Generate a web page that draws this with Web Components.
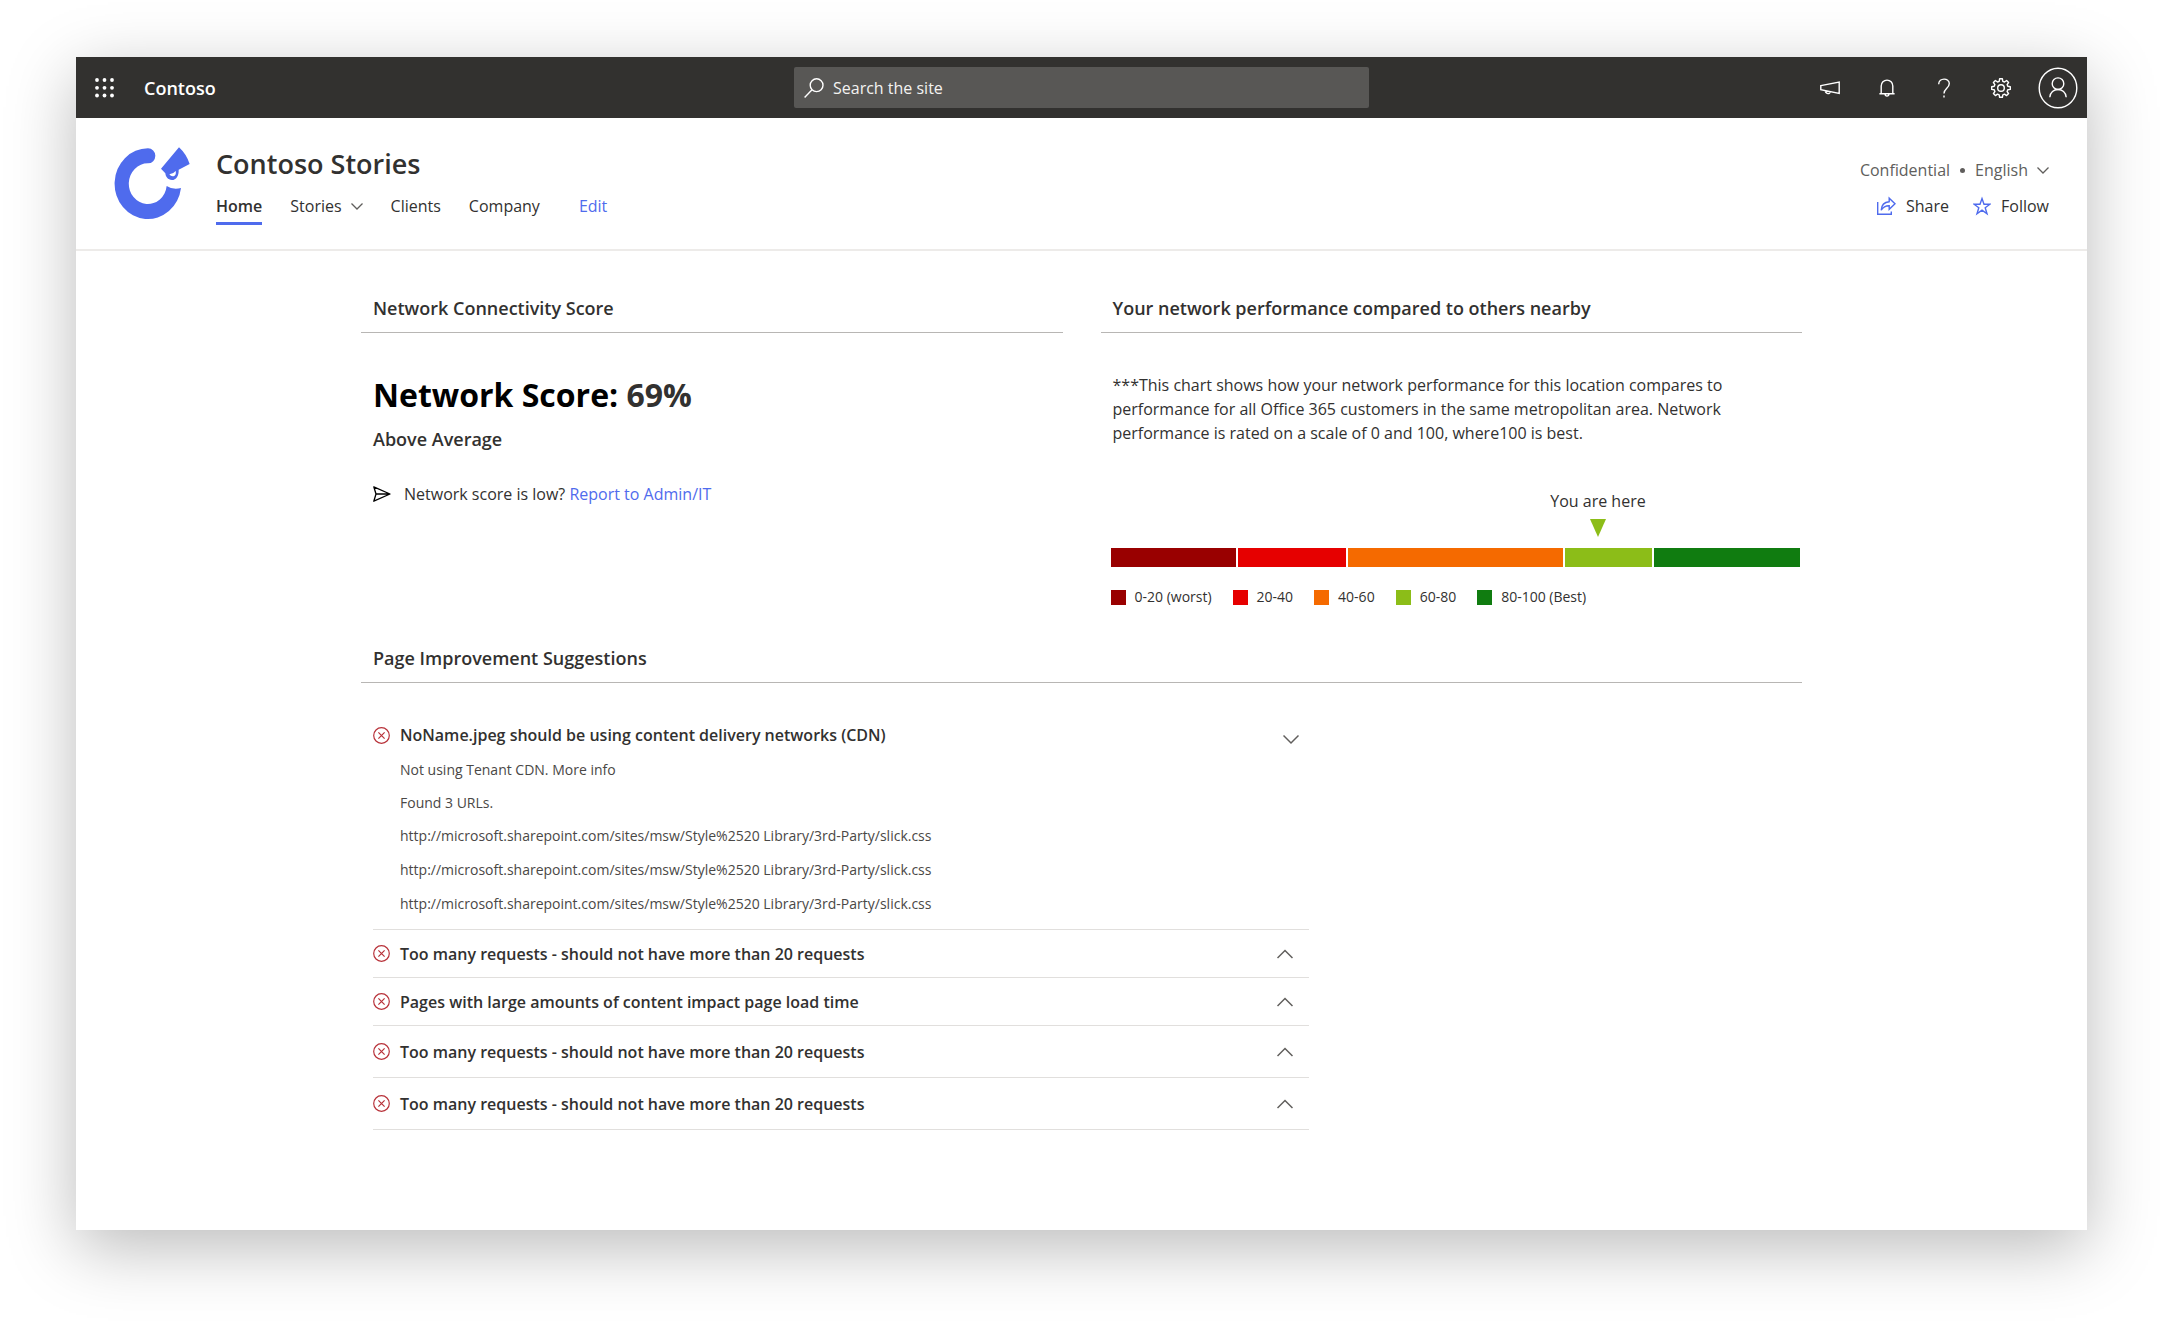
<!DOCTYPE html>
<html lang="en">
<head>
<meta charset="utf-8">
<title>Contoso Stories</title>
<style>
  body { margin: 0; background: #fff; color: #323130; font: 16px/24px "Open Sans", "Noto Sans", sans-serif; }
</style>
</head>
<body>
<site-frame>
  <suite-bar slot="bar" brand="Contoso"></suite-bar>
  <site-header slot="header" heading="Contoso Stories"></site-header>
  <titled-section heading="Network Connectivity Score">
    <network-score value="69%" rating="Above Average"></network-score>
  </titled-section>
  <titled-section heading="Your network performance compared to others nearby">
    <score-chart>***This chart shows how your network performance for this location compares to performance for all Office 365 customers in the same metropolitan area. Network performance is rated on a scale of 0 and 100, where100 is best.</score-chart>
  </titled-section>
  <titled-section class="wide" heading="Page Improvement Suggestions">
    <suggestion-list>
      <suggestion-item open heading="NoName.jpeg should be using content delivery networks (CDN)">
        <url-report></url-report>
      </suggestion-item>
      <suggestion-item heading="Too many requests - should not have more than 20 requests"></suggestion-item>
      <suggestion-item heading="Pages with large amounts of content impact page load time"></suggestion-item>
      <suggestion-item roomy heading="Too many requests - should not have more than 20 requests"></suggestion-item>
      <suggestion-item roomy heading="Too many requests - should not have more than 20 requests"></suggestion-item>
    </suggestion-list>
  </titled-section>
</site-frame>

<script>
const reset = `
  *, *::before, *::after { box-sizing: border-box; }
  button, input, select { font: inherit; color: inherit; background: none; border: 0; padding: 0; margin: 0; border-radius: 0; }
  button { cursor: pointer; text-align: left; }
  h1, h2, h3, p, ul { margin: 0; padding: 0; font: inherit; list-style: none; }
  a { color: inherit; text-decoration: none; }
  svg { display: block; flex: none; fill: none; stroke: currentColor; }
`;

function define(name, render) {
  customElements.define(name, class extends HTMLElement {
    constructor() {
      super();
      this.attachShadow({ mode: "open" });
    }
    connectedCallback() {
      this.shadowRoot.innerHTML = `<style>${reset}</style>` + render(this);
    }
  });
}

define("site-frame", () => `
  <style>
    :host { display: block; }
    .desk { padding: 57px 77px 96px 76px; background: #fff; }
    .window { background: #fff; box-shadow: 0 18px 64px rgba(0, 0, 0, 0.27); }
    main { display: grid; grid-template-columns: 1fr 1fr; column-gap: 38px; row-gap: 34px; max-width: 1441px; margin: 0 auto; padding: 40px 0 100px; }
    ::slotted(.wide) { grid-column: 1 / -1; }
  </style>
  <div class="desk"><div class="window">
    <slot name="bar"></slot>
    <slot name="header"></slot>
    <main><slot></slot></main>
  </div></div>
`);

define("suite-bar", el => `
  <style>
    :host { display: block; background: #32312f; color: #fff; }
    header { display: grid; grid-template-columns: 1fr 575px 1fr; align-items: center; height: 61px; }
    .start { display: flex; align-items: center; gap: 29px; padding-left: 19px; }
    .start svg { fill: #fff; stroke: none; }
    .brand { font-size: 18px; font-weight: 600; }
    label { display: flex; align-items: center; gap: 9px; height: 41px; padding: 0 10px; background: #585755; border-radius: 2px; }
    input { flex: 1; min-width: 0; outline: none; }
    input::placeholder { color: #f3f2f1; opacity: 1; }
    .end { display: flex; justify-content: flex-end; padding-right: 1px; }
    .end button { display: flex; align-items: center; justify-content: center; width: 57px; height: 61px; }
    svg { stroke-width: 1.4; }
  </style>
  <header>
    <div class="start">
      <button aria-label="App launcher"><svg width="20" height="20" viewBox="0 0 20 20">
        <circle cx="2" cy="2" r="1.9"/><circle cx="9.5" cy="2" r="1.9"/><circle cx="17" cy="2" r="1.9"/>
        <circle cx="2" cy="9.8" r="1.9"/><circle cx="9.5" cy="9.8" r="1.9"/><circle cx="17" cy="9.8" r="1.9"/>
        <circle cx="2" cy="17.5" r="1.9"/><circle cx="9.5" cy="17.5" r="1.9"/><circle cx="17" cy="17.5" r="1.9"/>
      </svg></button>
      <a class="brand" href="#">${el.getAttribute("brand")}</a>
    </div>
    <label>
      <svg width="20" height="20" viewBox="0 0 20 20"><circle cx="12.6" cy="7.2" r="6.4"/><path d="M8 11.8 .6 19.4"/></svg>
      <input type="search" aria-label="Search the site" placeholder="Search the site">
    </label>
    <div class="end">
      <button aria-label="Announcements"><svg width="22" height="20" viewBox="0 0 22 20"><path d="M1.8 7.6 20.2 4v11.4L1.8 11.6zM6.3 12.6c0 3.8 5 3.8 5 1"/></svg></button>
      <button aria-label="Notifications"><svg width="20" height="20" viewBox="0 0 20 20"><path d="M4.2 15.7V8.1a5.8 6 0 0 1 11.6 0v7.6M2.4 15.7h15.2M8 16c.3 2.8 3.7 2.8 4 0"/></svg></button>
      <button aria-label="Help"><svg width="20" height="20" viewBox="0 0 20 20"><path d="M4.7 6.2C4.8-.6 15.3-.4 15.3 5.6c0 4.6-5.3 4.8-5.3 10M10 17.6v2"/></svg></button>
      <button aria-label="Settings"><svg width="20" height="20" viewBox="0 0 20 20"><circle cx="10" cy="10" r="3.3"/><path stroke-linejoin="round" d="M8.6.8h2.8l.4 2.5 1.7.7 2.1-1.5 2 2-1.5 2.1.7 1.7 2.5.4v2.7l-2.5.4-.7 1.7 1.5 2.1-2 2-2.1-1.5-1.7.7-.4 2.5H8.6l-.4-2.5-1.7-.7-2.1 1.5-2-2 1.5-2.1-.7-1.7-2.5-.4V8.7l2.5-.4.7-1.7-1.5-2.1 2-2 2.1 1.5 1.7-.7z"/></svg></button>
      <button aria-label="Account"><svg width="40" height="42" viewBox="0 0 40 42"><ellipse cx="20" cy="21" rx="18.8" ry="19.8"/><circle cx="20" cy="16.7" r="5.8"/><path d="M11.8 30.3c.4-10.4 16-10.4 16.4 0"/></svg></button>
    </div>
  </header>
`);

define("site-header", el => `
  <style>
    :host { display: block; }
    .row { display: flex; align-items: flex-start; gap: 26px; padding: 28px 38px 24px; border-bottom: 2px solid #edebe9; }
    h1 { font-size: 27px; line-height: 36px; font-weight: 600; }
    nav { display: flex; gap: 28px; margin-top: 12px; }
    nav a, nav button { display: flex; align-items: center; gap: 9px; height: 31px; padding-bottom: 4px; border-bottom: 3px solid transparent; }
    nav a[aria-current] { font-weight: 600; border-color: #4f6bed; }
    nav .edit { color: #4f6bed; margin-left: 11px; }
    .chevron { stroke: #605e5c; stroke-width: 1.3; }
    .meta { margin-left: auto; padding-top: 12px; display: grid; row-gap: 12px; justify-items: end; }
    .meta div { display: flex; align-items: center; height: 24px; }
    .info { gap: 10px; color: #605e5c; }
    .info label { display: flex; align-items: center; gap: 9px; }
    .dot { width: 5px; height: 5px; border-radius: 50%; background: #605e5c; }
    select { appearance: none; field-sizing: content; line-height: 24px; }
    .actions { gap: 24px; }
    .actions button { display: flex; align-items: center; gap: 10px; }
    .actions svg { color: #4f6bed; stroke-width: 1.4; }
    .logo { fill: #4f6bed; stroke: none; }
  </style>
  <div class="row">
    <svg class="logo" width="76" height="74" viewBox="20 18 228 222" role="img" aria-label="Contoso logo">
      <path d="M122 25A22 22.5 0 0 1 122 70A57 61 0 1 0 178 138Q198 151 221 144A100 106 0 1 1 122 25Z"/>
      <path fill-rule="evenodd" d="M215 22Q237 42 247 72L214 89C215 108 206 120 194 120C181 120 175 110 174 100L161 86ZM186 103Q198 102 205 93C207 104 203 109 196 109Q190 109 186 103Z"/>
    </svg>
    <div>
      <h1>${el.getAttribute("heading")}</h1>
      <nav>
        <a href="#" aria-current="page">Home</a>
        <button>Stories <svg class="chevron" width="12" height="8" viewBox="0 0 12 8"><path d="m.5 1.5 5.5 5.5 5.5-5.5"/></svg></button>
        <a href="#">Clients</a>
        <a href="#">Company</a>
        <a class="edit" href="#">Edit</a>
      </nav>
    </div>
    <div class="meta">
      <div class="info">
        <span>Confidential</span><span class="dot"></span>
        <label><select aria-label="Language"><option>English</option></select>
        <svg class="chevron" width="12" height="8" viewBox="0 0 12 8"><path d="m.5 1.5 5.5 5.5 5.5-5.5"/></svg></label>
      </div>
      <div class="actions">
        <button><svg width="20" height="20" viewBox="0 0 20 20"><path d="M1.7 6v12.3H15.3V15.5M5.2 14.2C5.5 8.5 8 6 13.2 5.7V2.2L19 7.8l-5.8 5.5V9.8C9.5 9.7 7.3 10.8 5.2 14.2z"/></svg>Share</button>
        <button><svg width="18" height="20" viewBox="0 0 18 20"><path d="m9 2.5 2 5.7h6l-4.8 3.6 1.8 5.9L9 14.2l-5 3.5 1.8-5.9L1 8.2h6z"/></svg>Follow</button>
      </div>
    </div>
  </div>
`);

define("titled-section", el => `
  <style>
    :host { display: block; }
    h2 { padding: 0 12px 7px; border-bottom: 1px solid #b8b6b4; font-size: 18px; line-height: 34px; font-weight: 600; }
  </style>
  <section><h2>${el.getAttribute("heading")}</h2><slot></slot></section>
`);

define("network-score", el => `
  <style>
    :host { display: block; padding: 40px 12px 0; }
    h3 { color: #000; font-size: 32px; line-height: 44px; font-weight: 700; }
    strong { color: #323130; font-weight: 700; }
    .rating { margin-top: 8px; font-size: 18px; line-height: 28px; font-weight: 600; }
    .report { display: flex; align-items: center; gap: 13px; margin-top: 29px; }
    .report svg { color: #000; stroke-width: 1.3; }
    a { color: #4f6bed; }
  </style>
  <h3>Network Score: <strong>${el.getAttribute("value")}</strong></h3>
  <p class="rating">${el.getAttribute("rating")}</p>
  <p class="report">
    <svg width="18" height="18" viewBox="0 0 18 18"><path stroke-linejoin="round" d="M.8 1.8 17 9 .8 16.2 3 9zM3 9H16"/></svg>
    <span>Network score is low? <a href="#">Report to Admin/IT</a></span>
  </p>
`);

const bands = [
  ["0-20 (worst)", "#990000", 126],
  ["20-40", "#e60000", 108],
  ["40-60", "#f56a00", 215],
  ["60-80", "#8cbd18", 87],
  ["80-100 (Best)", "#107c10", 146],
];

define("score-chart", () => `
  <style>
    :host { display: block; padding: 40px 2px 0 10px; }
    .note { max-width: 620px; padding-left: 2px; }
    .marker { display: flex; flex-direction: column; align-items: center; gap: 6px; width: 120px; margin: 44px 0 11px calc(70.7% - 60px); }
    .marker svg { fill: #8cbd18; stroke: none; }
    .bar { display: flex; gap: 2px; height: 19px; }
    ul { display: flex; flex-wrap: wrap; gap: 21px; margin-top: 20px; font-size: 14px; line-height: 20px; }
    li { display: flex; align-items: center; gap: 9px; }
    li::before { content: ""; width: 15px; height: 15px; background: var(--band); }
  </style>
  <p class="note"><slot></slot></p>
  <div class="marker">You are here<svg width="16" height="18" viewBox="0 0 16 18"><path d="M0 0h16L8 18z"/></svg></div>
  <div class="bar">${bands.map(([, colour, size]) => `<span style="flex:${size} 1 0;background:${colour}"></span>`).join("")}</div>
  <ul>${bands.map(([text, colour]) => `<li style="--band:${colour}">${text}</li>`).join("")}</ul>
`);

define("suggestion-list", () => `
  <style>
    :host { display: block; max-width: 936px; padding: 34px 0 0 12px; }
  </style>
  <slot></slot>
`);

define("suggestion-item", el => {
  const open = el.hasAttribute("open");
  return `
  <style>
    :host { display: block; border-bottom: 1px solid #e1dfdd; }
    :host([open]) { padding-bottom: 8px; }
    button { display: flex; align-items: center; gap: 10px; width: 100%; height: 47px; padding-right: 16px; font-weight: 600; }
    :host([roomy]) button { height: 51px; }
    :host([open]) button { height: 36px; padding-right: 10px; }
    .text { flex: 1; }
    .error { color: #b8323a; stroke-width: 1.2; }
    .chevron { color: #605e5c; stroke-width: 1.5; }
    .body { padding-left: 27px; }
  </style>
  <h3><button aria-expanded="${open}">
    <svg class="error" width="17" height="17" viewBox="0 0 17 17"><circle cx="8.5" cy="8.5" r="7.8"/><path d="m5.4 5.4 6.2 6.2M11.6 5.4l-6.2 6.2"/></svg>
    <span class="text">${el.getAttribute("heading")}</span>
    <svg class="chevron" width="16" height="20" viewBox="0 0 16 20"><path d="${open ? "m.5 10.5 7.5 7.5 7.5-7.5" : "M.5 14 8 6.5l7.5 7.5"}"/></svg>
  </button></h3>
  ${open ? `<div class="body"><slot></slot></div>` : ""}`;
});

define("url-report", () => `
  <style>
    :host { display: block; font-size: 14px; color: #4a4846; }
    p { line-height: 33px; }
    li { line-height: 34px; }
  </style>
  <p>Not using Tenant CDN. <a href="#">More info</a></p>
  <p>Found 3 URLs.</p>
  <ul>${`<li><a href="#">http://microsoft.sharepoint.com/sites/msw/Style%2520 Library/3rd-Party/slick.css</a></li>`.repeat(3)}</ul>
`);
</script>
</body>
</html>
